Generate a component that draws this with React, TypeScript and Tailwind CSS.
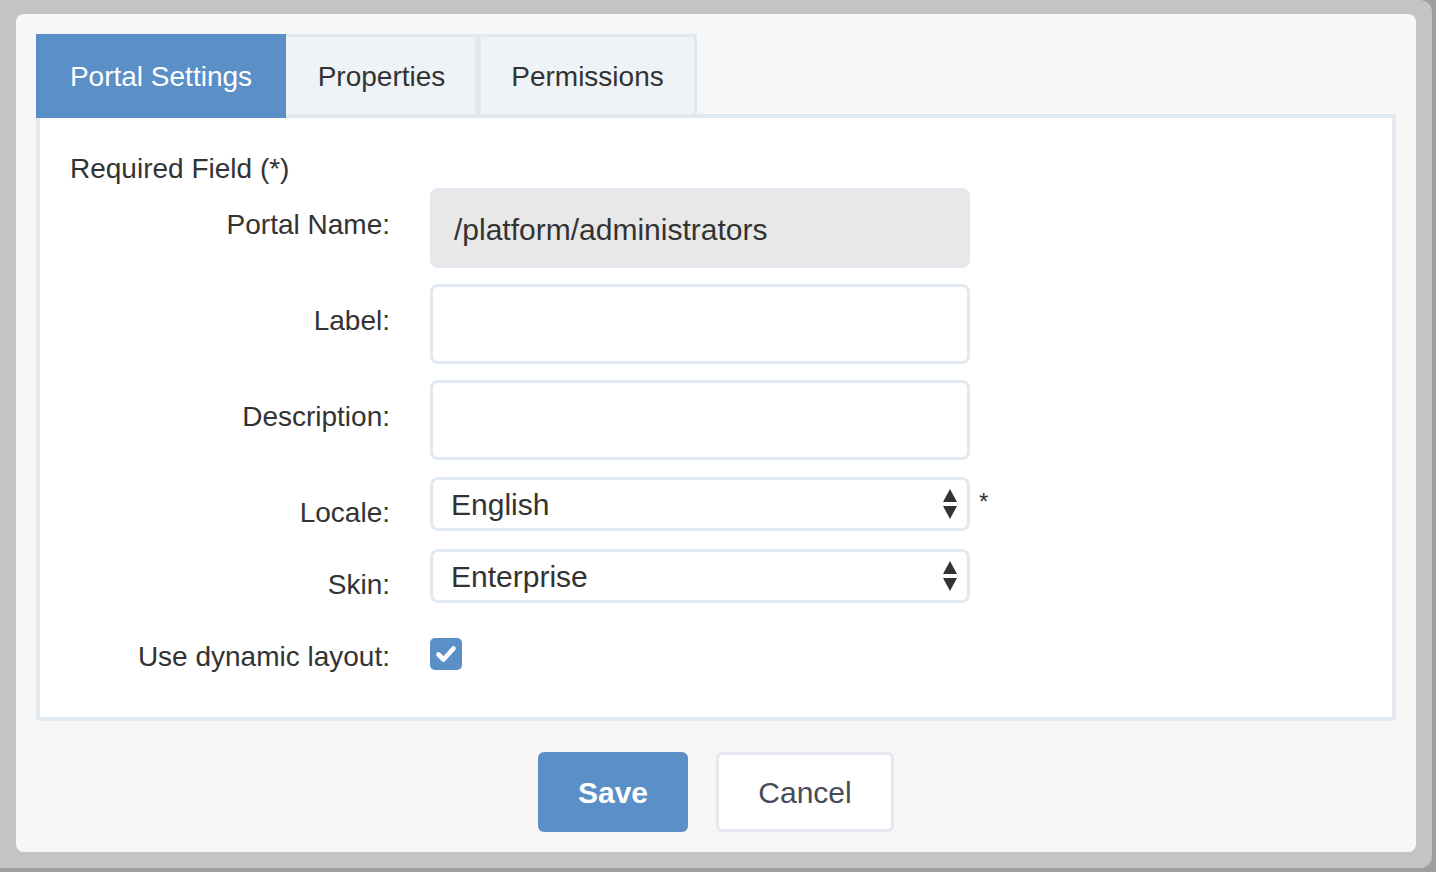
const font = { fontFamily: '"Liberation Sans", Arial, sans-serif' };

function SelectArrows() {
  return (
    <svg width="16" height="32" viewBox="0 0 16 32" className="shrink-0">
      <path d="M8 1 L15 14 L1 14 Z" fill="#333333" />
      <path d="M1 18 L15 18 L8 31 Z" fill="#333333" />
    </svg>
  );
}

function CheckMark() {
  return (
    <svg width="22" height="22" viewBox="0 0 22 22">
      <path d="M3.5 11.5 L8.5 16.5 L18.5 5.5" fill="none" stroke="#ffffff" strokeWidth="4.6" strokeLinecap="round" strokeLinejoin="round" />
    </svg>
  );
}

function FieldLabel({ children }: { children: React.ReactNode }) {
  return (
    <div className="w-[320px] shrink-0 pt-[21px] text-right text-[28px] leading-[32px] text-[#333333]">
      {children}
    </div>
  );
}

export default function App() {
  return (
    <div className="h-[872px] w-[1436px] bg-[#9f9f9f]" style={font}>
      <div className="h-[868px] w-[1432px] rounded-r-[12px] bg-[#c4c4c4] pl-[16px] pt-[14px]">
        <div className="flex h-[838px] w-[1400px] flex-col rounded-[8px] bg-[#f7f7f7] px-[20px] pt-[20px]">
          {/* tabs */}
          <div className="relative z-10 -mb-[4px] flex h-[84px]">
            <div className="flex h-[84px] w-[250px] items-center justify-center bg-[#5b8fc8] pt-[2px] text-[28px] text-white">
              Portal Settings
            </div>
            <div className="flex h-[84px] w-[192px] items-center justify-center border-[3px] border-b-[4px] border-l-0 border-[#e1e8ef] bg-[#eff3f7] pt-[2px] pl-[2px] text-[28px] text-[#333333]">
              Properties
            </div>
            <div className="flex h-[84px] w-[219px] items-center justify-center border-[3px] border-b-[4px] border-[#e1e8ef] bg-[#eff3f7] pt-[2px] text-[28px] text-[#333333]">
              Permissions
            </div>
          </div>

          {/* panel */}
          <div className="h-[607px] w-[1360px] rounded-b-[4px] border-[4px] border-[#e1e8ef] bg-white pl-[30px] pt-[35px]">
            <div className="text-[28px] leading-[32px] text-[#333333]">Required Field (*)</div>

            <div className="mt-[3px] flex gap-[40px]">
              <FieldLabel>Portal Name:</FieldLabel>
              <div className="flex h-[80px] w-[540px] items-center rounded-[8px] border-[3px] border-[#e3e8ee] bg-[#e8e8e9] pl-[21px] pt-[2px] text-[30px] text-[#333333]">
                /platform/administrators
              </div>
            </div>

            <div className="mt-[16px] flex gap-[40px]">
              <FieldLabel>Label:</FieldLabel>
              <div className="h-[80px] w-[540px] rounded-[8px] border-[3px] border-[#e1e8ef] bg-white" />
            </div>

            <div className="mt-[16px] flex gap-[40px]">
              <FieldLabel>Description:</FieldLabel>
              <div className="h-[80px] w-[540px] rounded-[8px] border-[3px] border-[#e1e8ef] bg-white" />
            </div>

            <div className="mt-[17px] flex gap-[40px]">
              <div className="w-[320px] shrink-0 pt-[20px] text-right text-[28px] leading-[32px] text-[#333333]">
                Locale:
              </div>
              <div className="flex items-start">
                <div className="flex h-[54px] w-[540px] items-center justify-between rounded-[8px] border-[3px] border-[#e1e8ef] bg-white pl-[18px] pr-[9px] text-[30px] text-[#333333]">
                  <span>English</span>
                  <SelectArrows />
                </div>
                <span className="ml-[9px] pt-[13px] text-[24px] leading-[24px] text-[#333333]">*</span>
              </div>
            </div>

            <div className="mt-[18px] flex gap-[40px]">
              <div className="w-[320px] shrink-0 pt-[20px] text-right text-[28px] leading-[32px] text-[#333333]">
                Skin:
              </div>
              <div className="flex h-[54px] w-[540px] items-center justify-between rounded-[8px] border-[3px] border-[#e1e8ef] bg-white pl-[18px] pr-[9px] text-[30px] text-[#333333]">
                <span>Enterprise</span>
                <SelectArrows />
              </div>
            </div>

            <div className="mt-[17px] flex gap-[40px]">
              <FieldLabel>Use dynamic layout:</FieldLabel>
              <div className="pt-[18px]">
                <div className="flex h-[32px] w-[32px] items-center justify-center rounded-[5px] bg-[#5b8fc8]">
                  <CheckMark />
                </div>
              </div>
            </div>
          </div>

          {/* buttons */}
          <div className="mt-[31px] flex justify-center gap-[28px]">
            <button className="h-[80px] w-[150px] rounded-[6px] bg-[#5b8fc8] text-[30px] font-bold text-white">
              Save
            </button>
            <button className="h-[80px] w-[178px] rounded-[6px] border-[3px] border-[#e4e9ef] bg-white text-[30px] text-[#464c59]">
              Cancel
            </button>
          </div>
        </div>
      </div>
    </div>
  );
}
